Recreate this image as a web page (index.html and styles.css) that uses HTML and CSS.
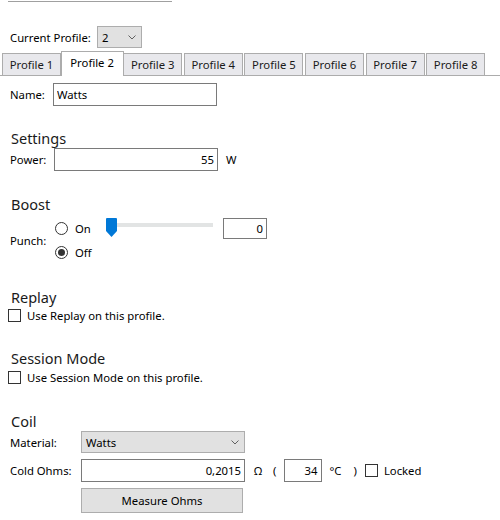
FILE: index.html
```html
<!DOCTYPE html>
<html lang="en">
<head>
    <meta charset="UTF-8">
    <title>Profiles</title>
    <link rel="stylesheet" href="styles.css">
</head>
<body>
    <div class="topline"></div>

    <div class="profile-bar">
        <label class="profile-label">Current Profile:</label>
        <div class="combo combo-profile">
            <span>2</span>
            <svg class="chevron" width="8" height="5" viewBox="0 0 8 5"><path d="M0.5 0.5 L4 4 L7.5 0.5" fill="none" stroke="#606060" stroke-width="1"/></svg>
        </div>
    </div>

    <div class="tabs">
        <div class="tab">Profile 1</div>
        <div class="tab active">Profile 2</div>
        <div class="tab">Profile 3</div>
        <div class="tab">Profile 4</div>
        <div class="tab">Profile 5</div>
        <div class="tab">Profile 6</div>
        <div class="tab">Profile 7</div>
        <div class="tab">Profile 8</div>
    </div>

    <div class="page">
        <div class="row name-row">
            <label class="lbl-name">Name:</label>
            <input class="text name-input" type="text" value="Watts">
        </div>

        <h2>Settings</h2>
        <div class="row">
            <label class="lbl-power">Power:</label>
            <input class="text num power-input" type="text" value="55">
            <span class="unit-w">W</span>
        </div>

        <h2 class="boost-title">Boost</h2>
        <div class="punch">
            <label class="lbl-punch">Punch:</label>
            <div class="radios">
                <label class="radio-row"><span class="radio"></span>On</label>
                <label class="radio-row"><span class="radio checked"></span>Off</label>
            </div>
            <div class="slider">
                <svg class="thumb" width="11" height="19" viewBox="0 0 11 19"><path d="M1 0 H10 Q11 0 11 1 V13 L5.5 19 L0 13 V1 Q0 0 1 0 Z" fill="#0078d7"/></svg>
                <div class="track"></div>
            </div>
            <input class="text num punch-input" type="text" value="0">
        </div>

        <h2 class="replay-title">Replay</h2>
        <label class="check-row"><span class="check"></span>Use Replay on this profile.</label>

        <h2 class="session-title">Session Mode</h2>
        <label class="check-row session-check"><span class="check"></span>Use Session Mode on this profile.</label>

        <h2 class="coil-title">Coil</h2>
        <div class="row">
            <label class="lbl-coil">Material:</label>
            <div class="combo combo-material">
                <span>Watts</span>
                <svg class="chevron" width="8" height="5" viewBox="0 0 8 5"><path d="M0.5 0.5 L4 4 L7.5 0.5" fill="none" stroke="#606060" stroke-width="1"/></svg>
            </div>
        </div>
        <div class="row ohms-row">
            <label class="lbl-coil">Cold Ohms:</label>
            <input class="text num ohms-input" type="text" value="0,2015">
            <span class="omega">Ω</span>
            <span class="paren-open">(</span>
            <input class="text num temp-input" type="text" value="34">
            <span class="deg">°C</span>
            <span class="paren-close">)</span>
            <label class="check-row locked"><span class="check"></span>Locked</label>
        </div>
        <button class="measure">Measure Ohms</button>
    </div>
</body>
</html>
```

FILE: styles.css
```css
body {
    margin: 0;
    width: 500px;
    height: 520px;
    overflow: hidden;
    background: #fff;
    color: #000;
    font-family: "Noto Sans", sans-serif;
    font-size: 11.3px;
}

.topline {
    margin-left: 8px;
    width: 164px;
    height: 1px;
    border-bottom: 1px solid #a0a0a0;
}

/* current profile picker */
.profile-bar {
    display: flex;
    align-items: center;
    height: 22px;
    margin-top: 24px;
    padding-left: 10px;
}

.profile-label {
    width: 87px;
}

.combo {
    box-sizing: border-box;
    display: flex;
    align-items: center;
    justify-content: space-between;
    height: 22px;
    padding: 0 5px 0 4px;
    background: #e1e1e1;
    border: 1px solid #adadad;
}

.combo-profile {
    width: 45px;
}

.combo-material {
    width: 164px;
}

/* tab strip */
.tabs {
    display: flex;
    align-items: flex-end;
    gap: 1.6px;
    height: 24px;
    margin-top: 3px;
    padding-left: 2px;
    border-bottom: 1px solid #acacac;
}

.tab {
    box-sizing: border-box;
    display: flex;
    align-items: center;
    justify-content: center;
    width: 59px;
    height: 22px;
    background: #e8e8ec;
    border: 1px solid #acacac;
    border-bottom: none;
    color: #1a1a1a;
}

.tab.active {
    position: relative;
    width: 63px;
    height: 25px;
    margin: 0 -2px -1px;
    padding-bottom: 3px;
    background: #fff;
    color: #000;
}

/* tab page */
.page {
    padding-left: 10px;
}

.row {
    display: flex;
    align-items: center;
    height: 22px;
}

.text {
    box-sizing: border-box;
    height: 23px;
    padding: 0 3px;
    border: 1px solid #7a7a7a;
    background: #fff;
    color: #000;
    font: inherit;
    outline: none;
}

.num {
    text-align: right;
}

.name-row {
    margin-top: 7px;
}

.lbl-name {
    width: 43px;
}

.name-input {
    width: 164px;
}

h2 {
    margin: 23px 0 0;
    padding-left: 1px;
    font-size: 14.5px;
    font-weight: normal;
    line-height: 20px;
    color: #1a1a1a;
}

.lbl-power {
    width: 44px;
}

.power-input {
    width: 164px;
}

.unit-w {
    margin-left: 8px;
}

.boost-title {
    margin-top: 24px;
}

/* punch: radios + slider */
.punch {
    display: flex;
    align-items: center;
    height: 48px;
    margin-top: 2px;
}

.lbl-punch {
    width: 45px;
}

.radios {
    display: flex;
    flex-direction: column;
    width: 51px;
    align-self: flex-start;
}

.radio-row {
    display: flex;
    align-items: center;
    height: 24px;
}

.radio {
    box-sizing: border-box;
    width: 13px;
    height: 13px;
    margin-right: 7px;
    border: 1px solid #333;
    border-radius: 50%;
    display: flex;
    align-items: center;
    justify-content: center;
}

.radio.checked::after {
    content: "";
    width: 7px;
    height: 7px;
    border-radius: 50%;
    background: #333;
}

.slider {
    display: flex;
    align-items: flex-start;
    align-self: flex-start;
    width: 107px;
    margin-top: 2px;
}

.thumb {
    display: block;
}

.track {
    flex: 1;
    height: 4px;
    margin-top: 5px;
    background: #e2e4e4;
}

.punch-input {
    align-self: flex-start;
    width: 44px;
    height: 21px;
    margin: 2px 0 0 10px;
}

/* checkboxes */
.check-row {
    display: flex;
    align-items: center;
    height: 16px;
}

.page > .check-row {
    margin-left: -2px;
}

.check {
    box-sizing: border-box;
    width: 13px;
    height: 13px;
    margin-right: 6px;
    border: 1px solid #333;
    background: #fff;
}

.replay-title {
    margin-top: 23px;
}

.session-title {
    margin-top: 25px;
}

.session-check {
    margin-top: 1px;
}

.coil-title {
    margin-top: 26px;
}

.lbl-coil {
    width: 71px;
}

.ohms-row {
    height: 23px;
    margin-top: 6px;
}

.ohms-input {
    width: 164px;
}

.omega {
    margin-left: 9px;
}

.paren-open {
    margin-left: 11px;
}

.temp-input {
    width: 38px;
    margin-left: 7px;
}

.deg {
    margin-left: 8px;
}

.paren-close {
    margin-left: 12px;
}

.locked {
    margin-left: 8px;
}

.measure {
    box-sizing: border-box;
    display: block;
    width: 162px;
    height: 25px;
    margin: 6px 0 0 71px;
    padding: 0;
    background: #e1e1e1;
    border: 1px solid #adadad;
    color: #000;
    font: inherit;
}
```
